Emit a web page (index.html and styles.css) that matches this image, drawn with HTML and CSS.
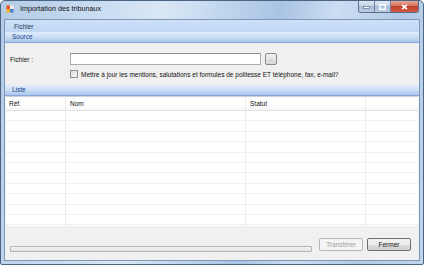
FILE: index.html
```html
<!DOCTYPE html>
<html>

<head lang="fr">
    <meta charset="UTF-8">
    <title>Importation des tribunaux</title>
    <link rel="stylesheet" href="styles.css">
</head>

<body>

    <div class="window">
        <!--barre de titre-->
        <div class="titlebar">
            <svg class="app-icon" width="8" height="8" viewBox="0 0 8 8">
                <rect x="0" y="0" width="8" height="8" fill="#e8e8e8" stroke="#8a8a8a" stroke-width="0.6"/>
                <rect x="0.5" y="0.5" width="3.5" height="3.5" fill="#e2502c"/>
                <rect x="0.5" y="4" width="3.5" height="3.5" fill="#f4b221"/>
                <rect x="4" y="4" width="3.5" height="3.5" fill="#3d7fd6"/>
                <rect x="4" y="0.5" width="3.5" height="3.5" fill="#f2f2f2"/>
            </svg>
            <span class="title">Importation des tribunaux</span>
            <div class="caption">
                <div class="cap-btn min">
                    <svg width="7" height="5" viewBox="0 0 7 5"><rect x="0.5" y="2.5" width="6" height="2" fill="#fff" stroke="#3c4f68" stroke-width="0.5"/></svg>
                </div>
                <div class="cap-btn max">
                    <svg width="7" height="6" viewBox="0 0 7 6"><rect x="0.75" y="0.75" width="5.5" height="4.5" fill="none" stroke="#fff" stroke-width="1.3"/></svg>
                </div>
                <div class="cap-btn close">
                    <svg width="7" height="6" viewBox="0 0 7 6"><path d="M1 0.8 L6 5.2 M6 0.8 L1 5.2" stroke="#fff" stroke-width="1.6"/></svg>
                </div>
            </div>
        </div>

        <div class="client">
            <!--menu-->
            <div class="menubar">
                <span class="menu-item">Fichier</span>
            </div>

            <!--source-->
            <div class="section-head">Source</div>
            <div class="source">
                <label class="lb" for="txtFichier">Fichier :</label>
                <div class="file-row">
                    <input class="txt" type="text" id="txtFichier">
                    <button class="browse">...</button>
                </div>
                <label class="check">
                    <span class="box"></span>
                    <span>Mettre à jour les mentions, salutations et formules de politesse ET téléphone, fax, e-mail?</span>
                </label>
            </div>

            <!--liste-->
            <div class="section-head">Liste</div>
            <div class="list">
                <div class="list-head">
                    <div class="col c-ref">Réf.</div>
                    <div class="col c-nom">Nom</div>
                    <div class="col c-statut">Statut</div>
                    <div class="col c-rest"></div>
                </div>
                <div class="list-body">
                    <div class="col c-ref"></div>
                    <div class="col c-nom"></div>
                    <div class="col c-statut"></div>
                    <div class="col c-rest"></div>
                </div>
            </div>

            <!--boutons-->
            <div class="footer">
                <div class="progress"></div>
                <button class="btn" disabled>Transférer</button>
                <button class="btn">Fermer</button>
            </div>
        </div>
    </div>

</body>

</html>
```

FILE: styles.css
```css
* {
    padding: 0;
    margin: 0;
    box-sizing: border-box;
}

body {
    width: 424px;
    height: 265px;
    overflow: hidden;
    font-family: "Liberation Sans", Arial, sans-serif;
    font-size: 6.5px;
    color: #111;
}

.window {
    width: 424px;
    height: 265px;
    border: 1px solid #4a6584;
    border-radius: 5px 5px 2px 2px;
    padding: 0 3px 3px 3px;
    display: flex;
    flex-direction: column;
    background: linear-gradient(100deg, #b3cae6 0%, #c6daf0 18%, #d9e7f6 35%, #bcd3ec 50%, #a9c3e3 60%, #cbdef2 72%, #b2cae6 86%, #c0d5ec 100%);
}

/* barre de titre */
.titlebar {
    height: 18px;
    display: flex;
    align-items: flex-start;
}

.app-icon {
    margin: 4px 0 0 2px;
}

.title {
    margin: 3px 0 0 6px;
    font-size: 7.2px;
    line-height: 10px;
    color: #111;
}

.caption {
    margin-left: auto;
    margin-right: 1px;
    display: flex;
    height: 12px;
    border: 1px solid #5b708d;
    border-top: 0;
    border-radius: 0 0 3px 3px;
    overflow: hidden;
}

.cap-btn {
    display: flex;
    align-items: center;
    justify-content: center;
    height: 11px;
}

.cap-btn.min,
.cap-btn.max {
    width: 16px;
    border-right: 1px solid #6f84a0;
    background: linear-gradient(#dde8f4, #c4d4e7 45%, #a9bdd6 50%, #b9cce2);
}

.cap-btn.close {
    width: 27px;
    background: linear-gradient(#e9a99a, #d5715c 45%, #c2402a 50%, #d25a42);
}

/* zone client */
.client {
    flex: 1;
    display: flex;
    flex-direction: column;
    border: 1px solid #7d98b8;
    background: #f0f0f0;
}

.menubar {
    height: 12px;
    display: flex;
    align-items: center;
    padding-left: 9px;
    background: linear-gradient(#cde0f7, #bfd6f3);
}

.menu-item {
    color: #1e395b;
}

.section-head {
    height: 11px;
    line-height: 10px;
    padding-left: 7px;
    color: #15428b;
    background: linear-gradient(#e2edfb, #c9dcf5 55%, #abc6ec);
    border-bottom: 1px solid #86a8dc;
}

/* source */
.source {
    height: 42px;
    display: grid;
    grid-template-columns: 60px auto;
    grid-template-rows: 12px 8px;
    row-gap: 5px;
    align-items: center;
    padding: 10px 0 0 5px;
}

.file-row {
    display: flex;
    gap: 4px;
}

.txt {
    width: 191px;
    height: 12px;
    border: 1px solid #abadb3;
    border-top-color: #8e9297;
    background: #fff;
}

.browse {
    width: 12px;
    height: 12px;
    border: 1px solid #8a8a8a;
    border-radius: 2px;
    background: linear-gradient(#f2f2f2, #e6e6e6 50%, #d8d8d8);
    font-size: 5px;
    line-height: 8px;
    color: #555;
}

.check {
    grid-column: 2;
    display: flex;
    align-items: center;
    gap: 3px;
}

.box {
    width: 8px;
    height: 8px;
    border: 1px solid #8f8f8f;
    background: linear-gradient(135deg, #dcdcdc, #f7f7f7);
}

/* liste */
.list {
    height: 130px;
    margin: 0 1px 0 1px;
    display: flex;
    flex-direction: column;
    background: #fff;
    border-top: 1px solid #c8d2de;
}

.list-head {
    height: 14px;
    display: flex;
    border-bottom: 1px solid #e2e2e2;
    background: linear-gradient(#ffffff, #ffffff 60%, #f5f6f8);
}

.list-head .col {
    line-height: 13px;
    padding-left: 3px;
}

.list-head .c-nom,
.list-head .c-statut {
    padding-left: 4px;
}

.list-body {
    flex: 1;
    display: flex;
    background: repeating-linear-gradient(#fff 0, #fff 9.4px, #f0f0f0 9.4px, #f0f0f0 10.4px);
}

.col {
    border-right: 1px solid #ececec;
}

.c-ref {
    width: 60px;
}

.c-nom {
    width: 180px;
}

.c-statut {
    width: 120px;
}

.c-rest {
    flex: 1;
    border-right: 0;
}

/* pied */
.footer {
    flex: 1;
    display: flex;
    align-items: flex-end;
    padding: 0 7px 8px 5px;
}

.progress {
    width: 302px;
    height: 6px;
    margin-right: 7px;
    border: 1px solid #b4b4b4;
    border-radius: 1px;
    background: linear-gradient(#f4f4f4, #e3e3e3);
}

.btn {
    width: 44px;
    height: 13px;
    margin-left: 4px;
    margin-bottom: 1px;
    border: 1px solid #707070;
    border-radius: 2px;
    background: linear-gradient(#f2f2f2, #ebebeb 50%, #dddddd 50%, #cfcfcf);
    font-family: "Liberation Sans", Arial, sans-serif;
    font-size: 6.5px;
    color: #111;
}

.btn:first-of-type {
    margin-left: 0;
}

.btn:disabled {
    border-color: #b3b8bc;
    background: #f4f4f4;
    color: #a2a2a2;
}
```
